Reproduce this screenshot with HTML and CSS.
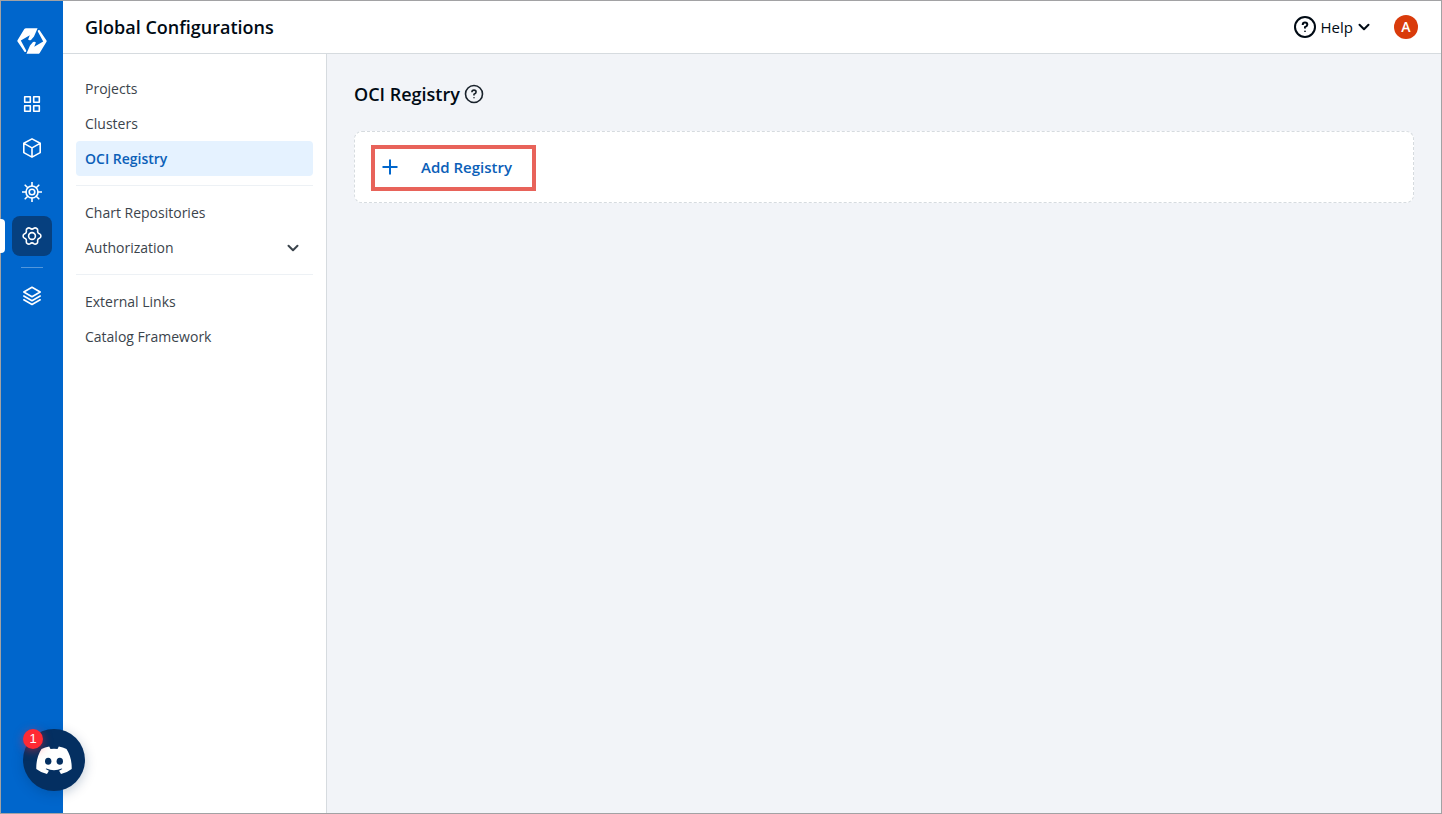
FILE: index.html
```html
<!DOCTYPE html>
<html lang="en">
<head>
<meta charset="utf-8">
<meta name="viewport" content="width=device-width, initial-scale=1">
<title>Global Configurations</title>
<link rel="stylesheet" href="styles.css">
</head>
<body>
<div class="app">
  <nav class="rail" aria-label="Main">
    <a class="rail-logo" href="#" aria-label="Home">
      <svg width="30" height="28" viewBox="0 0 30 28" fill="#fff">
        <path d="M9 1.2H20.6L17 9.4 14 12.9Q12.4 13.8 11.1 12.6L12.8 8.3 3.8 13.6 9.2 23.4Q9.6 25.4 7.6 25L.5 14.6Q.1 13.9.5 13.2L7.3 2.1Q7.9 1.2 9 1.2Z"/>
        <path d="M21 26.8H9.4L13 18.6 16 15.1Q17.6 14.2 18.9 15.4L17.2 19.7 26.2 14.4 20.8 4.6Q20.4 2.6 22.4 3L29.5 13.4Q29.9 14.1 29.5 14.8L22.7 25.9Q22.1 26.8 21 26.8Z"/>
      </svg>
    </a>
    <a class="rail-item" href="#" aria-label="Overview">
      <svg class="icon" viewBox="0 0 20 20"><path d="M2.7 2.7h5.6v5.6H2.7zM11.7 2.7h5.6v5.6h-5.6zM2.7 11.7h5.6v5.6H2.7zM11.7 11.7h5.6v5.6h-5.6z"/></svg>
    </a>
    <a class="rail-item" href="#" aria-label="Applications">
      <svg class="icon" viewBox="0 0 20 20"><path d="M10 .9 18.2 5.3v9.3L10 19.1 1.8 14.6V5.3zM1.9 5.4 10 9.9l8.1-4.5M10 9.9v9"/></svg>
    </a>
    <a class="rail-item" href="#" aria-label="Clusters">
      <svg class="icon" viewBox="0 0 20 20"><circle cx="10" cy="10" r="6"/><circle cx="10" cy="10" r="2.8"/><path d="M10 4V.2M10 16v3.8M4 10H.2M16 10h3.8M5.8 5.8 3.2 3.2M14.2 5.8l2.6-2.6M5.8 14.2l-2.6 2.6M14.2 14.2l2.6 2.6"/></svg>
    </a>
    <a class="rail-item rail-item-active" href="#" aria-label="Global Configurations" aria-current="page">
      <svg class="icon" viewBox="-10 -10 20 20"><circle r="3.4"/><path d="M7.4-2.3A2.5 2.5 0 0 1 7.4 2.3 2.4 2.4 0 0 0 5.7 5.3 2.5 2.5 0 0 1 1.7 7.6 2.4 2.4 0 0 0-1.7 7.6 2.5 2.5 0 0 1-5.7 5.3 2.4 2.4 0 0 0-7.4 2.3 2.5 2.5 0 0 1-7.4-2.3 2.4 2.4 0 0 0-5.7-5.3 2.5 2.5 0 0 1-1.7-7.6 2.4 2.4 0 0 0 1.7-7.6 2.5 2.5 0 0 1 5.7-5.3 2.4 2.4 0 0 0 7.4-2.3Z"/></svg>
    </a>
    <hr class="rail-divider">
    <a class="rail-item" href="#" aria-label="Stack Manager">
      <svg class="icon" viewBox="0 0 20 20"><path d="M10 1.3 18.2 6 10 10.7 1.8 6zM1.8 10 10 14.7l8.2-4.7M1.8 13.8l8.2 4.7 8.2-4.7"/></svg>
    </a>
  </nav>

  <div class="content">
    <header class="topbar">
      <h1 class="title">Global Configurations</h1>
      <button class="help" type="button">
        <svg class="help-icon" viewBox="0 0 22 22"><circle cx="11" cy="11" r="10"/><path d="M8.7 9Q8.7 6.6 11 6.6T13.3 8.8Q13.3 10.2 11 11.2V12.6"/><path d="M11 14.8v1"/></svg>
        <span>Help</span>
        <svg class="chevron" viewBox="0 0 12 12"><path d="m1.5 3.8 4.5 4.5 4.5-4.5"/></svg>
      </button>
      <button class="avatar" type="button" aria-label="Account">A</button>
    </header>

    <div class="body">
      <nav class="sidebar" aria-label="Configurations">
        <a class="nav-item" href="#">Projects</a>
        <a class="nav-item" href="#">Clusters</a>
        <a class="nav-item nav-item-active" href="#" aria-current="page">OCI Registry</a>
        <hr class="nav-divider">
        <a class="nav-item" href="#">Chart Repositories</a>
        <button class="nav-item" type="button" aria-expanded="false">
          <span>Authorization</span>
          <svg class="chevron" viewBox="0 0 12 12"><path d="m1.5 3.8 4.5 4.5 4.5-4.5"/></svg>
        </button>
        <hr class="nav-divider">
        <a class="nav-item" href="#">External Links</a>
        <a class="nav-item" href="#">Catalog Framework</a>
      </nav>

      <main class="main">
        <div class="heading">
          <h2 class="title">OCI Registry</h2>
          <button class="info" type="button" aria-label="About OCI Registry">
            <svg class="info-icon" viewBox="0 0 20 20"><circle cx="10" cy="10" r="8.5"/><path d="M7.9 8.2Q7.9 6.1 10 6.1T12.1 8Q12.1 9.3 10 10.2V11.5"/><path d="M10 13.3v1"/></svg>
          </button>
        </div>
        <section class="card">
          <button class="add" type="button">
            <svg class="plus" viewBox="0 0 16 16"><path d="M8 .5v15M.5 8h15"/></svg>
            <span>Add Registry</span>
          </button>
        </section>
      </main>
    </div>
  </div>

  <button class="chat" type="button" aria-label="Open Discord chat">
    <svg width="36" height="28" viewBox="0 0 36 28"><path fill="#fff" d="M30.5 3Q27 1.2 22.8.5L21.5 3.1Q18 2.6 14.5 3.1L13.2.5Q9 1.2 5.5 3 0 11.5.3 23 4.6 26.5 11 28L12.9 24.7 9.6 23.1 10.4 22.5Q18 26 25.6 22.5L26.4 23.1 23.1 24.7 25 28Q31.4 26.5 35.7 23 36 11.5 30.5 3Z"/><ellipse cx="12.2" cy="15.2" rx="3.2" ry="3.5" fill="#042f61"/><ellipse cx="23.8" cy="15.2" rx="3.2" ry="3.5" fill="#042f61"/></svg>
    <span class="badge">1</span>
  </button>
</div>
</body>
</html>
```

FILE: styles.css
```css
* {
  box-sizing: border-box;
}

body {
  margin: 0;
  font-family: "Open Sans", sans-serif;
  font-size: 14px;
  line-height: 20px;
  color: #000a14;
}

button {
  padding: 0;
  border: 0;
  background: none;
  font: inherit;
  color: inherit;
  cursor: pointer;
}

a {
  color: inherit;
  text-decoration: none;
}

svg {
  display: block;
  flex: none;
}

.app {
  position: relative;
  display: flex;
  min-height: 100vh;
  border: 1px solid #a2a2a4;
}

.rail {
  display: flex;
  flex: none;
  flex-direction: column;
  align-items: center;
  gap: 4px;
  width: 62px;
  padding-top: 20px;
  background: #0066cc;
}

.rail-logo {
  display: grid;
  place-items: center;
  height: 40px;
  margin-bottom: 19px;
}

.rail-item {
  position: relative;
  display: grid;
  place-items: center;
  width: 40px;
  height: 40px;
  border-radius: 8px;
}

.rail-item-active {
  background: #06407f;
}

.rail-item-active::before {
  content: "";
  position: absolute;
  top: 3px;
  left: -12px;
  width: 5px;
  height: 34px;
  border-radius: 0 4px 4px 0;
  background: #fff;
}

.rail-divider {
  width: 22px;
  height: 1px;
  margin: 7px 0 4px;
  border: 0;
  background: #5297dc;
}

.icon {
  width: 20px;
  height: 20px;
  fill: none;
  stroke: #fff;
  stroke-width: 1.6;
  stroke-linecap: round;
  stroke-linejoin: round;
}

.content {
  display: flex;
  flex: 1;
  flex-direction: column;
  min-width: 0;
}

.topbar {
  display: flex;
  align-items: center;
  height: 53px;
  padding: 0 23px 0 22px;
  border-bottom: 1px solid #d6dbdf;
  background: #fff;
}

.title {
  margin: 0;
  font-size: 18px;
  font-weight: 600;
  line-height: 24px;
}

.help {
  display: flex;
  align-items: center;
  gap: 5px;
  margin-left: auto;
  font-size: 15px;
}

.help-icon {
  width: 22px;
  height: 22px;
  fill: none;
  stroke: #000a14;
  stroke-width: 2;
}

.chevron {
  width: 12px;
  height: 12px;
  fill: none;
  stroke: currentColor;
  stroke-width: 2;
  stroke-linecap: round;
  stroke-linejoin: round;
}

.avatar {
  width: 24px;
  height: 24px;
  margin-left: 24px;
  border-radius: 50%;
  background: #d93b0b;
  color: #fff;
  font-size: 14px;
  font-weight: 600;
}

.body {
  display: flex;
  flex: 1;
}

.sidebar {
  display: flex;
  flex: none;
  flex-direction: column;
  width: 264px;
  padding: 17px 13px;
  border-right: 1px solid #d6dbdf;
  background: #fff;
}

.nav-item {
  display: flex;
  align-items: center;
  justify-content: space-between;
  height: 35px;
  padding: 0 14px 0 9px;
  border-radius: 4px;
  color: #3b444c;
}

.nav-item-active {
  background: #e5f2ff;
  color: #0b60b8;
  font-weight: 600;
}

.nav-divider {
  width: 100%;
  height: 1px;
  margin: 9px 0;
  border: 0;
  background: #edf1f5;
}

.main {
  flex: 1;
  min-width: 0;
  padding: 28px 27px;
  background: #f2f4f8;
}

.heading {
  display: flex;
  align-items: center;
  gap: 4px;
  margin-bottom: 25px;
}

.info-icon {
  width: 20px;
  height: 20px;
  fill: none;
  stroke: #19222b;
  stroke-width: 1.6;
}

.card {
  display: flex;
  padding: 13px 16px 11px;
  border: 1px dashed #d6dbdf;
  border-radius: 8px;
  background: #fff;
}

.add {
  display: flex;
  align-items: center;
  gap: 23px;
  height: 46px;
  padding: 0 20px 2px 7px;
  border: 4px solid #e8635a;
  color: #0b60b8;
  font-size: 15px;
  font-weight: 600;
}

.plus {
  width: 16px;
  height: 16px;
  fill: none;
  stroke: #0066cc;
  stroke-width: 2;
}

.chat {
  position: absolute;
  bottom: 22px;
  left: 22px;
  display: grid;
  place-items: center;
  width: 62px;
  height: 62px;
  border-radius: 50%;
  background: #042f61;
  box-shadow: 0 3px 12px rgba(4, 44, 92, 0.25);
}

.badge {
  position: absolute;
  top: 0;
  left: 0;
  width: 20px;
  height: 20px;
  border-radius: 50%;
  background: #ff2a33;
  box-shadow: 0 2px 10px rgba(251, 44, 54, 0.5);
  color: #fff;
  font-family: "Liberation Sans", sans-serif;
  font-size: 13px;
  line-height: 20px;
}
```
